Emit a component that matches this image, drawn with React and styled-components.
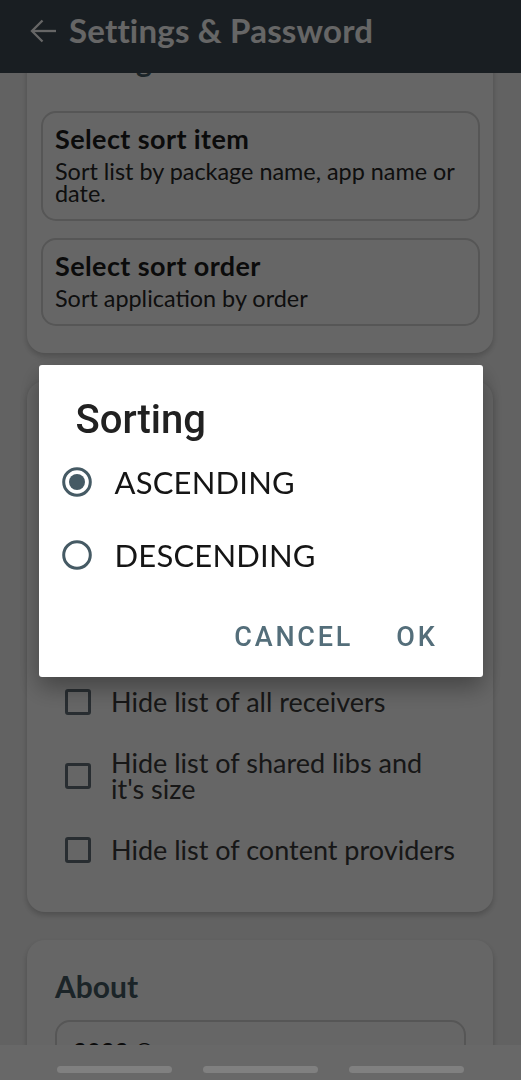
import React, { useState } from 'react';
import styled, { createGlobalStyle } from 'styled-components';

const GlobalStyle = createGlobalStyle`
  html, body {
    margin: 0;
    padding: 0;
    background: #f6f6f6;
    overflow: hidden;
  }
  * {
    box-sizing: border-box;
  }
`;

const Screen = styled.div`
  width: 521px;
  height: 1080px;
  display: flex;
  flex-direction: column;
  background: #f6f6f6;
  font-family: Lato, 'Open Sans', sans-serif;
  overflow: hidden;
  position: relative;
`;

const AppBar = styled.header`
  height: 73px;
  flex: none;
  display: flex;
  align-items: flex-start;
  gap: 13px;
  padding: 12px 0 0 30px;
  background: #3f4c55;
  position: relative;
  z-index: 2;
`;

const BackIcon = styled.svg`
  width: 26px;
  height: 24px;
  margin-top: 7px;
  flex: none;
`;

const AppTitle = styled.h1`
  margin: 0;
  font-size: 33px;
  line-height: 36px;
  font-weight: 700;
  color: #ffffff;
  letter-spacing: 0.2px;
`;

const Viewport = styled.main`
  flex: 1;
  overflow: hidden;
`;

/* list is scrolled a bit: first card's title sits under the app bar */
const Scroller = styled.div`
  margin-top: -58px;
  padding: 0 28px 0 27px;
  display: flex;
  flex-direction: column;
  gap: 28px;
`;

const Card = styled.section`
  background: #ffffff;
  border-radius: 18px;
  box-shadow: 0 3px 6px rgba(0, 0, 0, 0.22);
  padding: ${(p) => p.$pad || '27px 13px 27px 14px'};
  display: flex;
  flex-direction: column;
`;

const SectionTitle = styled.h2`
  margin: 0 0 ${(p) => p.$gap ?? 20}px;
  padding-left: ${(p) => p.$indent ?? 14}px;
  font-size: 30px;
  line-height: 36px;
  font-weight: 700;
  color: #455a64;
`;

const ItemList = styled.div`
  display: flex;
  flex-direction: column;
  gap: 17px;
`;

const ItemBox = styled.div`
  border: 2px solid #d6d6d6;
  border-radius: 15px;
  padding: 11px 12px 15px 12px;
  display: flex;
  flex-direction: column;
  gap: 6px;
`;

const ItemTitle = styled.div`
  font-size: 27px;
  line-height: 30px;
  font-weight: 700;
  letter-spacing: 0.4px;
  color: #1c1c1c;
`;

const ItemText = styled.div`
  font-size: 23.4px;
  line-height: 22px;
  color: #262626;
`;

const CheckList = styled.div`
  display: flex;
  flex-direction: column;
  gap: 14px;
  padding-left: 24px;
  padding-right: 20px;
`;

const CheckRow = styled.label`
  min-height: 60px;
  display: flex;
  align-items: center;
  gap: 20px;
`;

const CheckBox = styled.span`
  width: 26px;
  height: 26px;
  flex: none;
  border: 3px solid #65727b;
  border-radius: 3px;
`;

const CheckText = styled.span`
  font-size: 27px;
  line-height: 26px;
  color: #3a3a3a;
`;

const AboutBox = styled.div`
  border: 2px solid #d6d6d6;
  border-radius: 15px;
  padding: 15px 16px;
  font-size: 24px;
  line-height: 30px;
  font-weight: 700;
  color: #1c1c1c;
`;

const Scrim = styled.div`
  position: fixed;
  inset: 0;
  background: rgba(0, 0, 0, 0.6);
  z-index: 10;
  display: flex;
  justify-content: center;
  align-items: flex-start;
  padding-top: 365px;
`;

const Dialog = styled.div`
  width: 444px;
  background: #ffffff;
  border-radius: 3px;
  box-shadow: 0 10px 24px rgba(0, 0, 0, 0.35);
  padding: 33px 0 20px;
  display: flex;
  flex-direction: column;
`;

const DialogTitle = styled.h3`
  margin: 0 0 3px;
  padding-left: 37px;
  font-family: Roboto, 'Noto Sans', sans-serif;
  font-size: 40px;
  line-height: 44px;
  font-weight: 500;
  color: #212121;
`;

const RadioRow = styled.div`
  height: 73px;
  display: flex;
  align-items: center;
  gap: 23px;
  padding-left: 23px;
  cursor: pointer;
`;

const RadioLabel = styled.span`
  font-size: 31px;
  color: #151515;
  letter-spacing: 0.2px;
`;

const ButtonRow = styled.div`
  display: flex;
  justify-content: flex-end;
  gap: 43px;
  padding: 26px 45px 0 0;
`;

const TextButton = styled.button`
  border: none;
  background: none;
  padding: 0;
  font-family: Roboto, 'Noto Sans', sans-serif;
  font-size: 27px;
  line-height: 40px;
  font-weight: 500;
  letter-spacing: 2.8px;
  color: #546e7a;
  cursor: pointer;
`;

const NavBar = styled.nav`
  height: 35px;
  flex: none;
  display: flex;
  justify-content: center;
  gap: 31px;
  padding-top: 21px;
  background: #686868;
  position: relative;
  z-index: 20;
`;

const NavPill = styled.span`
  width: 115px;
  height: 7px;
  border-radius: 4px;
  background: #808080;
`;

const Radio = ({ checked }) => (
  <svg width="30" height="30" viewBox="0 0 30 30">
    <circle cx="15" cy="15" r="13.3" fill="none" stroke="#455a64" strokeWidth="3" />
    {checked && <circle cx="15" cy="15" r="8" fill="#455a64" />}
  </svg>
);

const hideOptions = [
  'Hide list of activities',
  'Hide list of services',
  'Hide list of permissions',
  'Hide list of all receivers',
  "Hide list of shared libs and it's size",
  'Hide list of content providers',
];

export default function App() {
  const [order, setOrder] = useState('asc');

  return (
    <>
      <GlobalStyle />
      <Screen>
        <AppBar>
          <BackIcon viewBox="0 0 26 24" fill="none" stroke="#ffffff" strokeWidth="2.3">
            <path d="M26 12H2" />
            <path d="M12.5 1.5 2 12l10.5 10.5" />
          </BackIcon>
          <AppTitle>Settings &amp; Password</AppTitle>
        </AppBar>

        <Viewport>
          <Scroller>
            <Card>
              <SectionTitle $gap={33}>Sorting</SectionTitle>
              <ItemList>
                <ItemBox>
                  <ItemTitle>Select sort item</ItemTitle>
                  <ItemText>Sort list by package name, app name or date.</ItemText>
                </ItemBox>
                <ItemBox>
                  <ItemTitle>Select sort order</ItemTitle>
                  <ItemText>Sort application by order</ItemText>
                </ItemBox>
              </ItemList>
            </Card>

            <Card $pad="27px 13px 32px 14px">
              <SectionTitle $gap={6}>Details</SectionTitle>
              <CheckList>
                {hideOptions.map((t) => (
                  <CheckRow key={t}>
                    <CheckBox />
                    <CheckText>{t}</CheckText>
                  </CheckRow>
                ))}
              </CheckList>
            </Card>

            <Card $pad="28px 27px 27px 28px">
              <SectionTitle $gap={16} $indent={0}>About</SectionTitle>
              <AboutBox>2022 ©</AboutBox>
            </Card>
          </Scroller>
        </Viewport>

        <NavBar>
          <NavPill />
          <NavPill />
          <NavPill />
        </NavBar>

        <Scrim>
          <Dialog>
            <DialogTitle>Sorting</DialogTitle>
            <RadioRow onClick={() => setOrder('asc')}>
              <Radio checked={order === 'asc'} />
              <RadioLabel>ASCENDING</RadioLabel>
            </RadioRow>
            <RadioRow onClick={() => setOrder('desc')}>
              <Radio checked={order === 'desc'} />
              <RadioLabel>DESCENDING</RadioLabel>
            </RadioRow>
            <ButtonRow>
              <TextButton>CANCEL</TextButton>
              <TextButton>OK</TextButton>
            </ButtonRow>
          </Dialog>
        </Scrim>
      </Screen>
    </>
  );
}
